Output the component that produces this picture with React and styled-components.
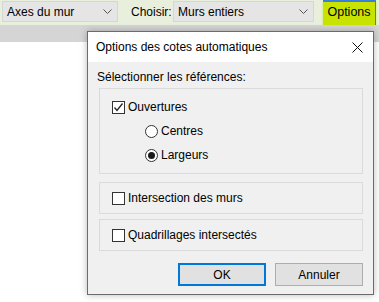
import React from "react";
import styled, { createGlobalStyle } from "styled-components";

const GlobalStyle = createGlobalStyle`
  html, body {
    margin: 0;
    padding: 0;
    width: 379px;
    height: 302px;
    overflow: hidden;
    background: #ffffff;
    font-family: "Liberation Sans", Arial, sans-serif;
    font-size: 12px;
    color: #000;
  }
`;

const Page = styled.div`
  position: relative;
  width: 379px;
  height: 302px;
  display: flex;
  flex-direction: column;
`;

const Toolbar = styled.div`
  height: 25px;
  background: #e8f0dd;
  display: flex;
  align-items: center;
  padding: 0 2px;
`;

const Combo = styled.div`
  box-sizing: border-box;
  height: 21px;
  width: ${(p) => p.$w}px;
  background: #e5e5e5;
  border: 1px solid #d6d6d6;
  display: flex;
  align-items: center;
  justify-content: space-between;
  padding: 0 5px 0 4px;
  margin-top: -2px;
`;

const Label = styled.span`
  width: 42px;
  margin: -2px 0 0 13px;
`;

const OptionsButton = styled.div`
  box-sizing: border-box;
  margin-left: 9px;
  height: 25px;
  width: 53px;
  background: #c9e300;
  border-top: 2px solid #3c7fd8;
  border-right: 1px solid #3c7fd8;
  box-shadow: 0 2px 2px rgba(201, 227, 0, 0.7);
  display: flex;
  align-items: center;
  justify-content: center;
  padding-bottom: 3px;
  font-size: 12.5px;
`;

const GreyBand = styled.div`
  height: 17px;
  background: #d5d5d5;
`;

const Dialog = styled.div`
  position: absolute;
  left: 87px;
  top: 31px;
  width: 287px;
  height: 264px;
  box-sizing: border-box;
  border: 1px solid #6b6b6b;
  background: #f0f0f0;
  box-shadow: 0 0 7px rgba(0, 0, 0, 0.28);
  display: flex;
  flex-direction: column;
`;

const TitleBar = styled.div`
  height: 30px;
  background: #ffffff;
  display: flex;
  align-items: center;
  justify-content: space-between;
  padding: 0 10px 0 8px;
`;

const Body = styled.div`
  flex: 1;
  display: flex;
  flex-direction: column;
  padding: 8px 10px 0 11px;
`;

const SectionLabel = styled.div`
  height: 16px;
  margin-left: -2px;
  margin-bottom: 2px;
`;

const Group = styled.div`
  box-sizing: border-box;
  height: ${(p) => p.$h}px;
  border: 1px solid #dadada;
  margin-bottom: ${(p) => p.$mb}px;
  padding: ${(p) => p.$pt}px 0 0 12px;
  display: flex;
  flex-direction: column;
  gap: 10px;
`;

const Row = styled.div`
  display: flex;
  align-items: center;
  height: 14px;
  padding-left: ${(p) => p.$indent || 0}px;
`;

const Box = styled.span`
  box-sizing: border-box;
  width: 13px;
  height: 13px;
  border: 1px solid #333;
  background: #fff;
  margin-right: 3px;
  display: inline-flex;
  align-items: center;
  justify-content: center;
`;

const Radio = styled.span`
  box-sizing: border-box;
  width: 13px;
  height: 13px;
  border: 1px solid #333;
  border-radius: 50%;
  background: #fff;
  margin-right: 3px;
  display: inline-flex;
  align-items: center;
  justify-content: center;
  &::after {
    content: "";
    width: 7px;
    height: 7px;
    border-radius: 50%;
    background: ${(p) => (p.$on ? "#1a1a1a" : "transparent")};
  }
`;

const Buttons = styled.div`
  display: flex;
  justify-content: flex-end;
  gap: 9px;
  margin-top: 4px;
`;

const Button = styled.button`
  box-sizing: border-box;
  width: 88px;
  height: 23px;
  font: inherit;
  color: #000;
  background: #e1e1e1;
  border: ${(p) => (p.$primary ? "2px solid #0078d7" : "1px solid #adadad")};
  padding: 0;
`;

const Chevron = () => (
  <svg width="9" height="6" viewBox="0 0 9 6">
    <path d="M0.5 0.5 L4.5 4.5 L8.5 0.5" fill="none" stroke="#555" strokeWidth="1" />
  </svg>
);

const Check = () => (
  <svg width="11" height="11" viewBox="0 0 11 11">
    <path d="M1.5 5.5 L4 8.5 L9.5 1.5" fill="none" stroke="#222" strokeWidth="1.3" />
  </svg>
);

const Close = () => (
  <svg width="11" height="11" viewBox="0 0 11 11">
    <path d="M0.5 0.5 L10.5 10.5 M10.5 0.5 L0.5 10.5" stroke="#111" strokeWidth="1" />
  </svg>
);

export default function App() {
  return (
    <Page>
      <GlobalStyle />
      <Toolbar>
        <Combo $w={116}>
          <span>Axes du mur</span>
          <Chevron />
        </Combo>
        <Label>Choisir:</Label>
        <Combo $w={141}>
          <span>Murs entiers</span>
          <Chevron />
        </Combo>
        <OptionsButton>Options</OptionsButton>
      </Toolbar>
      <GreyBand />
      <Dialog>
        <TitleBar>
          <span>Options des cotes automatiques</span>
          <Close />
        </TitleBar>
        <Body>
          <SectionLabel>Sélectionner les références:</SectionLabel>
          <Group $h={86} $mb={8} $pt={11}>
            <Row>
              <Box>
                <Check />
              </Box>
              Ouvertures
            </Row>
            <Row $indent={33}>
              <Radio />
              Centres
            </Row>
            <Row $indent={33}>
              <Radio $on />
              Largeurs
            </Row>
          </Group>
          <Group $h={32} $mb={5} $pt={8}>
            <Row>
              <Box />
              Intersection des murs
            </Row>
          </Group>
          <Group $h={32} $mb={8} $pt={8}>
            <Row>
              <Box />
              Quadrillages intersectés
            </Row>
          </Group>
          <Buttons>
            <Button $primary>OK</Button>
            <Button>Annuler</Button>
          </Buttons>
        </Body>
      </Dialog>
    </Page>
  );
}
